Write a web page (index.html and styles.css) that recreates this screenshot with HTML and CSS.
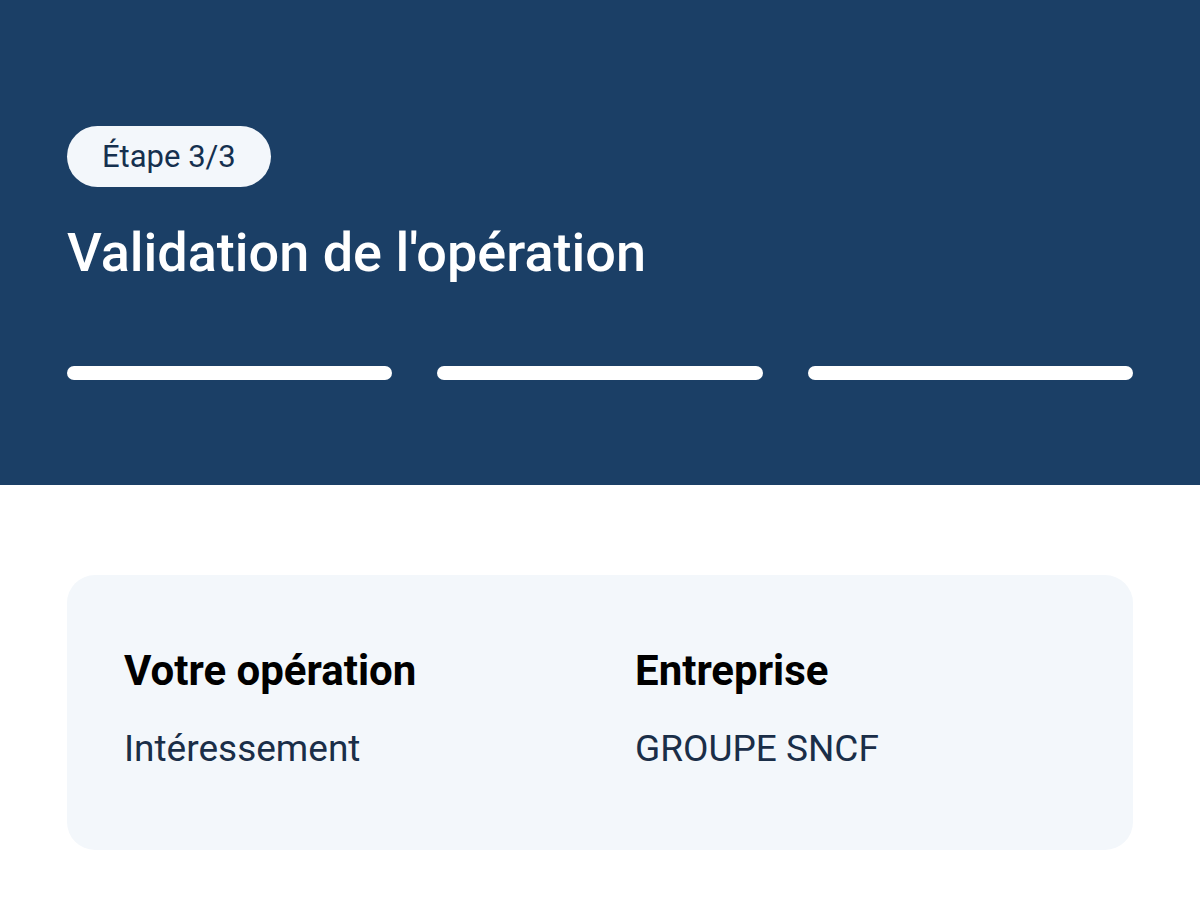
FILE: index.html
```html
<!DOCTYPE html>
<html lang="fr">
<head>
<meta charset="utf-8">
<link rel="stylesheet" href="styles.css">
</head>
<body>
<header class="hero">
  <span class="step-pill">Étape 3/3</span>
  <h1 class="hero-title">Validation de l'opération</h1>
  <div class="progress">
    <span class="progress-bar"></span>
    <span class="progress-bar"></span>
    <span class="progress-bar"></span>
  </div>
</header>
<main class="content">
  <section class="summary-card">
    <div class="summary-item">
      <h2 class="summary-label">Votre opération</h2>
      <p class="summary-value">Intéressement</p>
    </div>
    <div class="summary-item">
      <h2 class="summary-label">Entreprise</h2>
      <p class="summary-value">GROUPE SNCF</p>
    </div>
  </section>
</main>
</body>
</html>
```
FILE: styles.css
```css
* { box-sizing: border-box; }
html, body { margin: 0; padding: 0; background: #ffffff; }
body { font-family: Roboto, "Noto Sans", sans-serif; }

.hero {
  background: #1b3f66;
  height: 485px;
  padding: 126px 67px 0;
  display: flex;
  flex-direction: column;
  align-items: flex-start;
}
.step-pill {
  display: inline-flex;
  align-items: center;
  height: 61px;
  padding: 0 35px;
  border-radius: 31px;
  background: #f3f7fb;
  color: #15304f;
  font-size: 31px;
  line-height: 1;
}
.hero-title {
  margin: 34px 0 0;
  color: #ffffff;
  font-size: 54px;
  font-weight: 500;
  line-height: 1.2;
}
.progress {
  margin-top: 80px;
  width: 100%;
  display: flex;
  gap: 45px;
}
.progress-bar {
  flex: 1;
  height: 14px;
  border-radius: 7px;
  background: #ffffff;
}

.content { padding: 90px 67px 0; }
.summary-card {
  background: #f3f7fb;
  border-radius: 28px;
  height: 275px;
  padding: 71px 57px 0;
  display: grid;
  grid-template-columns: 1fr 1fr;
  column-gap: 70px;
}
.summary-label {
  margin: 0;
  color: #000000;
  font-size: 42px;
  font-weight: 700;
  line-height: 1.2;
}
.summary-value {
  margin: 31px 0 0;
  color: #1a2e48;
  font-size: 37px;
  line-height: 1.2;
}
```
